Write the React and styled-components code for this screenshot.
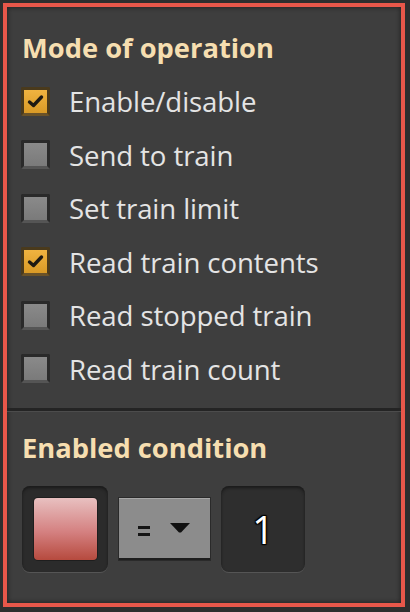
import React from "react";
import styled, { createGlobalStyle } from "styled-components";

const GlobalStyle = createGlobalStyle`
  html, body {
    margin: 0;
    padding: 0;
    background: #2e2e2e;
  }
  body {
    font-family: "Open Sans", "Noto Sans", sans-serif;
  }
`;

const Frame = styled.div`
  width: 410px;
  height: 612px;
  box-sizing: border-box;
  padding: 3px 5px 5px 3px;
`;

const Panel = styled.div`
  height: 100%;
  box-sizing: border-box;
  border: 4px solid #e8574a;
  background: #3e3e3e;
  box-shadow: inset 0 0 4px 1px #252525;
  display: flex;
  flex-direction: column;
`;

const Section = styled.div`
  padding: ${(p) => p.pad || "0 15px"};
  display: flex;
  flex-direction: column;
`;

const Title = styled.h2`
  margin: 0;
  font-size: 27.3px;
  font-weight: 700;
  color: #f6deb0;
  line-height: 32px;
`;

const List = styled.div`
  display: flex;
  flex-direction: column;
  gap: 23.5px;
  margin-top: 22px;
`;

const Row = styled.label`
  display: flex;
  align-items: center;
  gap: 19px;
  height: 30px;
  margin-left: -1px;
`;

const Box = styled.span`
  width: 29px;
  height: 29px;
  box-sizing: border-box;
  border-radius: 2px;
  flex: none;
  display: flex;
  align-items: center;
  justify-content: center;
  background: ${(p) =>
    p.checked
      ? "linear-gradient(#f0b440, #d99a26)"
      : "linear-gradient(#8a8a8a, #7a7a7a)"};
  border: 3px solid ${(p) => (p.checked ? "#4a3a1c" : "#2a2a2a")};
  border-bottom-color: ${(p) => (p.checked ? "#6a5228" : "#555")};
`;

const Label = styled.span`
  font-size: 27.6px;
  color: #e4e4e4;
  line-height: 30px;
  letter-spacing: -0.1px;
`;

const Divider = styled.div`
  margin-top: 24px;
  height: 3px;
  background: #242424;
  border-bottom: 1px solid #4c4c4c;
`;

const Controls = styled.div`
  display: flex;
  align-items: center;
  gap: 11px;
  margin-top: 22px;
`;

const Slot = styled.div`
  width: 86px;
  height: 86px;
  box-sizing: border-box;
  border-radius: 8px;
  background: #2b2b2b;
  box-shadow: inset 0 2px 3px #1a1a1a, 0 1px 0 #555;
  display: flex;
  align-items: center;
  justify-content: center;
`;

const Signal = styled.div`
  width: 63px;
  height: 62px;
  border-radius: 4px;
  background: linear-gradient(#e8c0c0, #d48080 55%, #b64a3e);
  box-shadow: 0 0 0 1px #1e1e1e;
`;

const Dropdown = styled.div`
  width: 91px;
  height: 62px;
  box-sizing: border-box;
  background: #8c8c8c;
  border-top: 1px solid #a8a8a8;
  border-bottom: 2px solid #1e1e1e;
  box-shadow: 0 0 0 1px #2a2a2a;
  display: flex;
  align-items: center;
  justify-content: center;
  gap: 20px;
  padding-right: 2px;
`;

const Eq = styled.span`
  width: 12px;
  height: 10px;
  margin-top: 6px;
  border-top: 3px solid #151515;
  border-bottom: 3px solid #151515;
  box-sizing: border-box;
`;

const NumberBox = styled(Slot)`
  width: 84px;
  background: #2e2e2e;
  font-size: 38px;
  font-weight: 500;
  color: #fff;
  text-shadow: 0 0 2px #000, 1px 1px 1px #000, -1px -1px 1px #000, 1px -1px 1px #000, -1px 1px 1px #000;
`;

const options = [
  { label: "Enable/disable", checked: true },
  { label: "Send to train", checked: false },
  { label: "Set train limit", checked: false },
  { label: "Read train contents", checked: true },
  { label: "Read stopped train", checked: false },
  { label: "Read train count", checked: false },
];

function Check() {
  return (
    <svg width="17" height="15" viewBox="0 0 17 15">
      <path d="M2.5 8 L6.5 11.5 L14.5 3" fill="none" stroke="#1e1a12" strokeWidth="3.4" strokeLinecap="round" strokeLinejoin="round" />
    </svg>
  );
}

function Triangle() {
  return (
    <svg width="20" height="10" viewBox="0 0 20 10">
      <path d="M0 0 H20 L11 9.5 H9 Z" fill="#111" />
    </svg>
  );
}

export default function App() {
  return (
    <>
      <GlobalStyle />
      <Frame>
        <Panel>
          <Section pad="25px 15px 0">
            <Title>Mode of operation</Title>
            <List>
              {options.map((o) => (
                <Row key={o.label}>
                  <Box checked={o.checked}>{o.checked && <Check />}</Box>
                  <Label>{o.label}</Label>
                </Row>
              ))}
            </List>
          </Section>
          <Divider />
          <Section pad="20px 15px 0">
            <Title>Enabled condition</Title>
            <Controls>
              <Slot>
                <Signal />
              </Slot>
              <Dropdown>
                <Eq />
                <Triangle />
              </Dropdown>
              <NumberBox>1</NumberBox>
            </Controls>
          </Section>
        </Panel>
      </Frame>
    </>
  );
}
